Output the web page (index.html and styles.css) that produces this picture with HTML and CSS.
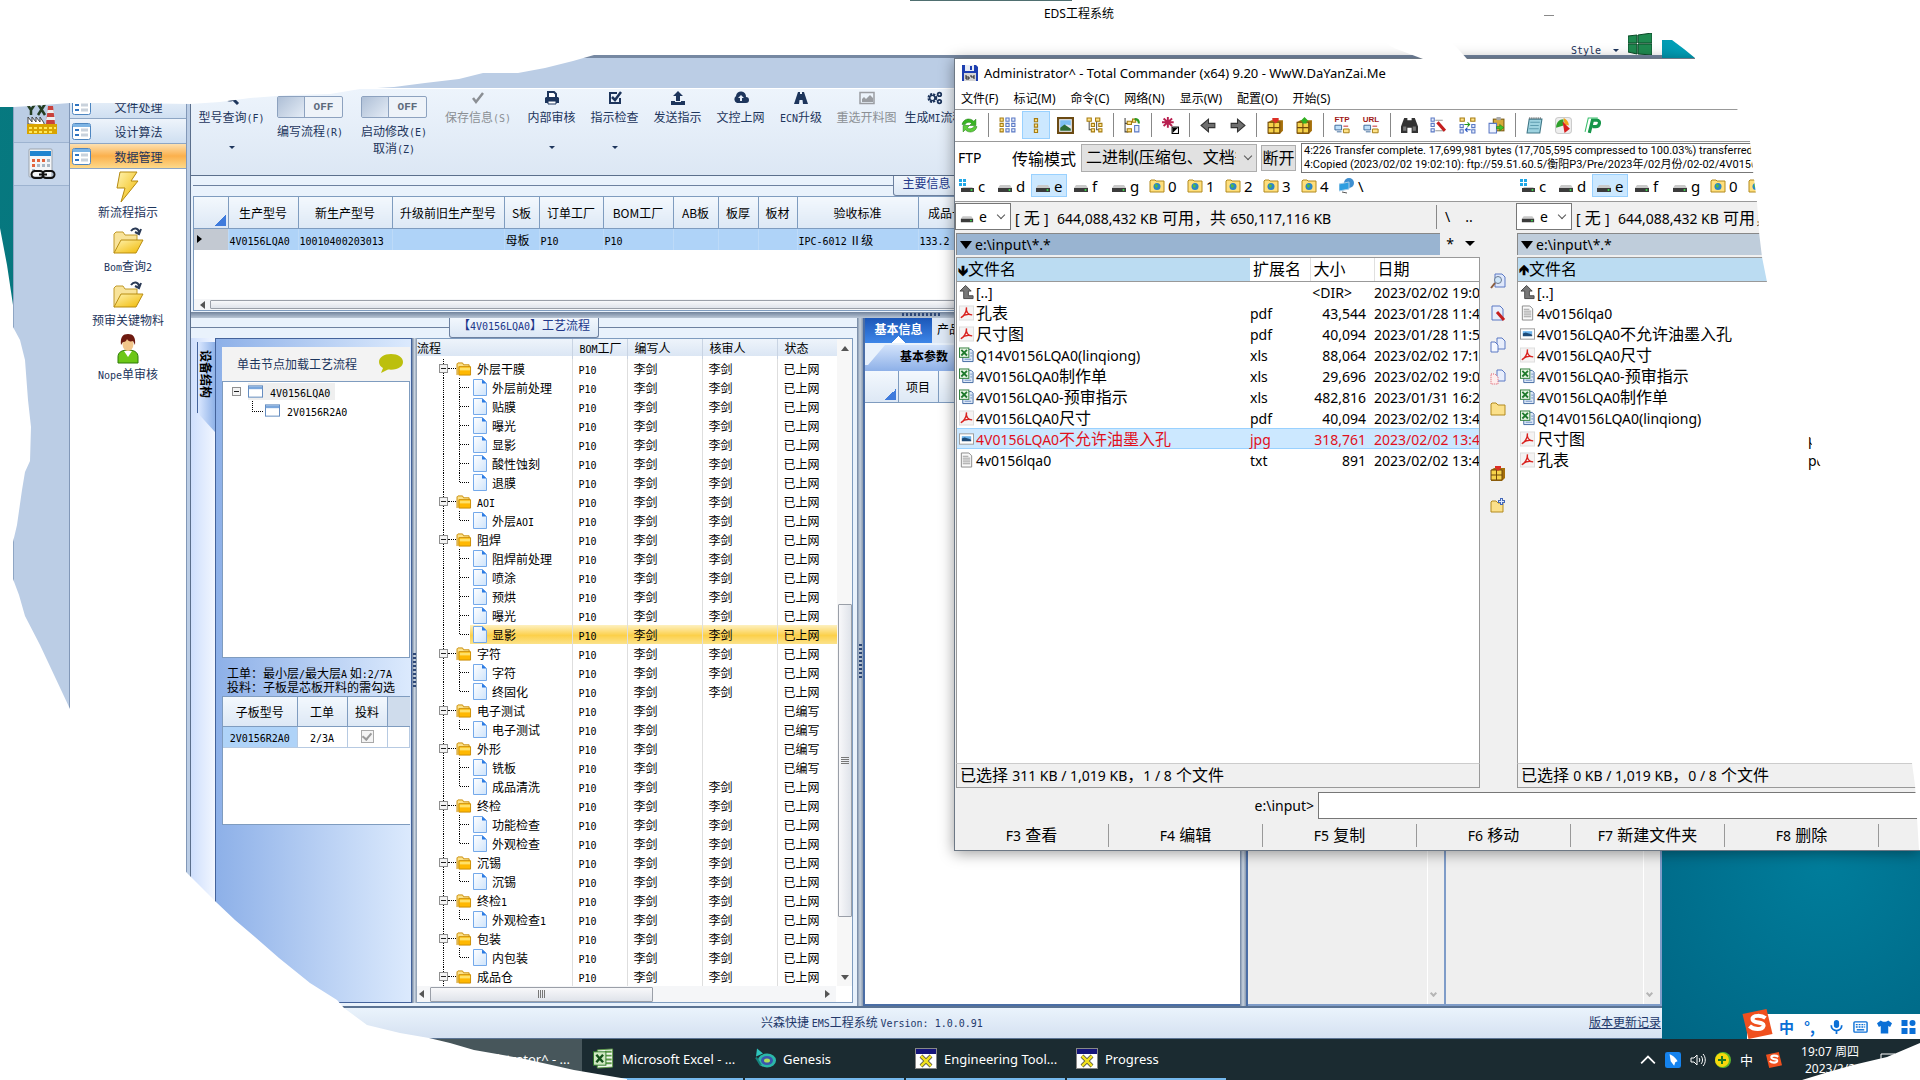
FILE: index.html
```html
<!DOCTYPE html>
<html lang="zh-CN">

<head>
    <meta charset="UTF-8" />
    <meta name="viewport" content="width=device-width, initial-scale=1.0" />
    <title>EDS工程系统</title>
    <link rel="stylesheet" href="styles.css">
</head>

<body>
    <!-- Icon sprite -->
    <svg class="sprite" aria-hidden="true">
        <linearGradient id="gFolder" x1="0" y1="0" x2="1" y2="1"><stop offset="0" stop-color="#fff3b0" /><stop offset="1" stop-color="#f0b800" /></linearGradient>
        <linearGradient id="gPage" x1="0" y1="0" x2="1" y2="1"><stop offset="0" stop-color="#ffffff" /><stop offset="1" stop-color="#cfe4fb" /></linearGradient>
        <symbol id="form" viewBox="0 0 19 17"><rect x=".5" y=".5" width="18" height="16" rx="2" fill="#fff" stroke="#4e86c0" /><rect x="1" y="1" width="17" height="3" fill="#7db4e4" /><path d="M3 7h4M3 12h4" stroke="#2f74c0" stroke-width="2" /><path d="M9 7h7M9 12h7" stroke="#c9d2dc" stroke-width="3" /></symbol>
        <symbol id="factory" viewBox="0 0 32 32"><path d="M1 1l4 6v5M9 1L5 7M12 1l7 11M19 1l-7 11" stroke="#243d22" stroke-width="2.5" fill="none" /><path d="M22 3h5l2 18h-9z" fill="#c9413c" /><path d="M21.5 7h6l.5 3h-7zM21 14h8v3h-9z" fill="#eee" /><path d="M2 21v-7l4 5v-5l4 5v-5l4 5v-5l4 6v2z" fill="#fff" stroke="#444" /><rect x="1" y="21" width="30" height="10" fill="#d9a400" /><path d="M3 24h3v2H3zM8 24h3v2H8zM13 24h3v2h-3zM18 24h3v2h-3zM23 24h3v2h-3zM28 24h2v2h-2zM3 28h3v2H3zM8 28h3v2H8zM13 28h3v2h-3zM18 28h3v2h-3zM23 28h3v2h-3z" fill="#ffe95a" /></symbol>
        <symbol id="calc" viewBox="0 0 32 32"><rect x="3" y="1" width="23" height="28" rx="1" fill="#f4f6f8" stroke="#9aa3ad" /><rect x="4" y="3" width="21" height="5" fill="#1f84cf" /><path d="M6 11h3v3H6zM11 11h3v3h-3zM16 11h3v3h-3zM6 16h3v3H6z" fill="#e2643c" /><path d="M21 11h3v3h-3zM11 16h3v3h-3zM16 16h3v3h-3zM21 16h3v3h-3zM6 21h3v3H6z" fill="#a9b8c4" /><path d="M8 23h6a3.500 3.500 0 0 1 0 7H9a3.500 3.500 0 0 1 0-7zM21 23h4a3.500 3.500 0 0 1 0 7h-5a3.500 3.500 0 0 1 0-7zM13 26.500h8" stroke="#111" stroke-width="2" fill="none" /></symbol>
        <symbol id="bolt" viewBox="0 0 32 32"><path d="M8 1h17l-6 9h7L9 31l4-14H5z" fill="url(#gFolder)" stroke="#b58a10" /></symbol>
        <symbol id="folderopen" viewBox="0 0 32 32"><path d="M2 28V9l2-2h7l2 3h12v5z" fill="#f8e39a" stroke="#c09a2a" /><path d="M2 28l7-13h22l-7 13z" fill="url(#gFolder)" stroke="#b98d12" /><path d="M19 6c3-4 7-3 8 1M29 4l-2 5-4-2" fill="none" stroke="#2a3a55" stroke-width="2" /></symbol>
        <symbol id="user" viewBox="0 0 32 32"><path d="M6 30v-6c0-5 4-7 10-7s10 2 10 7v6z" fill="#6cc717" stroke="#2d7a07" /><path d="M12 18l4 6 4-6z" fill="#fff" /><ellipse cx="16" cy="11" rx="5.500" ry="7" fill="#f2c58a" /><path d="M9 12C8 4 11 1 16 1s8 3 7 11l-2-4c-3 1-5 0-6-2-1 3-3 3-4 3z" fill="#6e1a10" /></symbol>
        <symbol id="chat" viewBox="0 0 24 20"><path d="M12 1C5 1 0 4.500 0 9c0 3 2 5 4 6l-2 5 7-3.500c10 1 15-3 15-7.500S19 1 12 1z" fill="#bcbf0d" /></symbol>
        <symbol id="windowi" viewBox="0 0 16 13"><rect x=".5" y=".5" width="15" height="12" fill="#fff" stroke="#5c86bd" /><rect x="1" y="1" width="14" height="3" fill="#7ba7dc" /></symbol>
        <symbol id="minus" viewBox="0 0 9 9"><rect x=".5" y=".5" width="8" height="8" fill="#f4f4f4" stroke="#8f8f8f" /><path d="M2 4.500h5" stroke="#222" /></symbol>
        <symbol id="folder" viewBox="0 0 17 15"><path d="M1 14V2l1-1h5l1 2h6v3" fill="#fce28a" stroke="#c98a00" /><path d="M3 14V5h12.500v9z" fill="#ffb802" stroke="#c98a00" /><path d="M4 6h11v3H4z" fill="#ffe169" /></symbol>
        <symbol id="page" viewBox="0 0 14 17"><path d="M.5.500h9l4 4v12H.500z" fill="url(#gPage)" stroke="#74a9ea" /><path d="M9 .500v4h4.500z" fill="#2b7be4" /></symbol>
        <symbol id="check" viewBox="0 0 16 16"><path d="M3 8l3 4 7-9" fill="none" stroke="#8b8f94" stroke-width="2.500" /></symbol>
        <symbol id="search" viewBox="0 0 16 16"><circle cx="6" cy="6" r="4.500" fill="none" stroke="#1d355c" stroke-width="2" /><path d="M9 9l5 5" stroke="#1d355c" stroke-width="3" /></symbol>
        <symbol id="print" viewBox="0 0 16 16"><path d="M4 8V2h6l2 2v4" fill="#fff" stroke="#1d355c" stroke-width="2" /><path d="M1 8l1-1h12l1 1v5H1z" fill="#1d355c" /><path d="M4 11h8v3H4z" fill="#fff" stroke="#1d355c" /></symbol>
        <symbol id="tick" viewBox="0 0 16 16"><path d="M13 8v5H3V3h7" fill="none" stroke="#1d355c" stroke-width="2" /><path d="M5 7l3 3 6-8" fill="none" stroke="#1d355c" stroke-width="2.500" /></symbol>
        <symbol id="upload" viewBox="0 0 16 16"><path d="M8 1l5 5h-3v5H6V6H3zM1 11h4v1h6v-1h4v4H1z" fill="#1d355c" /></symbol>
        <symbol id="cloud" viewBox="0 0 16 16"><path d="M4 13a4 4 0 0 1-1-7 5 5 0 0 1 10 1 3 3 0 0 1 0 6z" fill="#1d355c" /><path d="M8 5l3 3H9v3H7V8H5z" fill="#e6eef8" /></symbol>
        <symbol id="road" viewBox="0 0 16 16"><path d="M5 2h2v2h2V2h2l4 12h-5l-.5-4h-3L6 14H1z" fill="#1d355c" /></symbol>
        <symbol id="photo" viewBox="0 0 16 16"><rect x="1" y="2.500" width="14" height="11" fill="none" stroke="#9a9da2" stroke-width="1.500" /><path d="M3 12V9l2-2 2 2 4-4 3 3v4z" fill="#9a9da2" /></symbol>
        <symbol id="gears" viewBox="0 0 18 16"><circle cx="6" cy="8" r="4" fill="none" stroke="#1d355c" stroke-width="3" stroke-dasharray="2.200 1" /><circle cx="6" cy="8" r="3" fill="none" stroke="#1d355c" stroke-width="1.500" /><circle cx="14" cy="4" r="2" fill="none" stroke="#1d355c" stroke-width="2" /><circle cx="14" cy="12" r="2" fill="none" stroke="#1d355c" stroke-width="2" /></symbol>

        <symbol id="disk" viewBox="0 0 16 16"><path d="M0 0h14l2 2v14H0z" fill="#1d3fb0" /><path d="M3 0h9v6H3z" fill="#e8ecf4" /><path d="M8 1h2v4H8z" fill="#1d3fb0" /><rect x="2" y="8" width="12" height="8" fill="#d5d5d5" /><path d="M4 10v4h3v-2H4M9 10v2h3M12 10v4" stroke="#222" fill="none" /></symbol>
        <symbol id="refresh" viewBox="0 0 16 16"><path d="M1 7c1-5 7-7 11-3l2-2v6H8l2-2C8 4 5 5 4 7z" fill="#38b523" stroke="#1c7d10" stroke-width=".5" /><path d="M15 9c-1 5-7 7-11 3l-2 2V8h6l-2 2c2 2 5 1 6-1z" fill="#5ccd3b" stroke="#1c7d10" stroke-width=".5" /></symbol>
        <symbol id="grid" viewBox="0 0 16 16"><path d="M1 1h3v3H1zM1 6h3v3H1zM1 11h3v3H1z" fill="#ffe38a" stroke="#a57b10" /><path d="M6.500 1h3v3h-3zM12 1h3v3h-3zM6.500 6h3v3h-3zM12 6h3v3h-3zM6.500 11h3v3h-3zM12 11h3v3h-3z" fill="#e8eefc" stroke="#5a78c4" /></symbol>
        <symbol id="list" viewBox="0 0 16 16"><path d="M6 1.500h3v3H6zM6 6.500h3v3H6zM6 11.500h3v3H6z" fill="#ffe38a" stroke="#a57b10" /></symbol>
        <symbol id="frame" viewBox="0 0 16 16"><rect x="1" y="1" width="14" height="14" fill="#e3e9ef" stroke="#6b4a12" stroke-width="2" /><path d="M3 3h10v5l-4-1-6 3z" fill="#7fc0f2" /><path d="M3 10l4-3 6 4v2H3z" fill="#2e6b35" /></symbol>
        <symbol id="tree" viewBox="0 0 16 16"><path d="M3 3v9h4M10 3v9h3" stroke="#555" fill="none" /><path d="M1 1h4v3H1zM9 1h4v3H9zM5 6h3v3H5zM5 11h3v3H5zM12 11h3v3h-3zM12 6h3v3h-3z" fill="#ffe38a" stroke="#a57b10" /></symbol>
        <symbol id="branch" viewBox="0 0 16 16"><path d="M1 1v13h3M1 6h3" stroke="#444" fill="none" /><path d="M3 4h4v3H3zM3 11h4v3H3zM8 2h3v3H8z" fill="#ffe38a" stroke="#a57b10" /><path d="M10 2c3 0 4 2 4 4" stroke="#2b9a22" stroke-width="2" fill="none" /><path d="M10 8h4v6h-4z" fill="#e8eefc" stroke="#5a78c4" /></symbol>
        <symbol id="star" viewBox="0 0 16 16"><path d="M5.500 0v10M1.500 1.500l8 7M9.500 1.500l-8 7M0 5h11" stroke="#b82050" stroke-width="1.800" /><rect x="9.500" y="9.500" width="6" height="6" fill="#fff" stroke="#000" /><path d="M10 10h5l-5 5z" /></symbol>
        <symbol id="left" viewBox="0 0 16 16"><path d="M1 8l7-6v4h6v4H8v4z" fill="#6f6f6f" stroke="#333" /></symbol>
        <symbol id="right" viewBox="0 0 16 16"><path d="M15 8L8 2v4H2v4h6v4z" fill="#6f6f6f" stroke="#333" /></symbol>
        <symbol id="pack" viewBox="0 0 16 16"><path d="M1 5l3-2h11v10l-3 3H1z" fill="#a56f0a" /><path d="M1 5h11v10H1z" fill="#f6d24a" stroke="#70480a" /><path d="M6.500 5v10M1 10h11" stroke="#70480a" /><path d="M5 1h6v2l-3 3-3-3z" fill="#dc2f26" /></symbol>
        <symbol id="unpack" viewBox="0 0 16 16"><path d="M1 5l3-2h11v10l-3 3H1z" fill="#a56f0a" /><path d="M1 5h11v10H1z" fill="#f6d24a" stroke="#70480a" /><path d="M6.500 5v10M1 10h11" stroke="#70480a" /><path d="M8 0l4 4h-2v2H6V4H4z" fill="#30b022" /></symbol>
        <symbol id="net" viewBox="0 0 18 10"><path d="M1 1h7v5H1zM3 8h5" fill="#bfe0fa" stroke="#3c6798" /><path d="M10 5h6v4h-6z" fill="#ffe38a" stroke="#a57b10" /><path d="M10 2h5" stroke="#c02020" /></symbol>
        <symbol id="binoc" viewBox="0 0 16 16"><path d="M3 1h3v2h4V1h3l3 8v6h-6v-5H6v5H0V9z" fill="#333" /><path d="M2 9h3v4H2zM11 9h3v4h-3z" fill="#777" /></symbol>
        <symbol id="rename" viewBox="0 0 16 16"><path d="M1 1h3v3H1zM1 6h3v3H1zM1 11h3v3H1z" fill="#e8eefc" stroke="#5a78c4" /><path d="M5 3h7M5 13h9" stroke="#999" /><path d="M7 5l7 8" stroke="#c41e1e" stroke-width="3" /></symbol>
        <symbol id="sync" viewBox="0 0 16 16"><path d="M1 1h4v3H1zM11 1h4v3h-4z" fill="#ffe38a" stroke="#a57b10" /><path d="M1 7h3v3H1zM12 7h3v3h-3zM1 12h3v3H1zM12 12h3v3h-3z" fill="#e8eefc" stroke="#5a78c4" /><path d="M5 7h5M8 5l2 2-2 2" stroke="#239a1c" fill="none" /><path d="M11 12H6M8 10l-2 2 2 2" stroke="#2554c0" fill="none" /></symbol>
        <symbol id="paste" viewBox="0 0 16 16"><rect x="5" y="2" width="10" height="11" fill="#d8a93a" stroke="#7a5b12" /><rect x="8" y="0" width="4" height="3" fill="#aaa" /><path d="M1 6h7v9H1z" fill="#eef3ff" stroke="#5a78c4" /><path d="M8 9h3V7l4 3-4 3v-2H8z" fill="#43c32a" stroke="#1c7d10" stroke-width=".5" /></symbol>
        <symbol id="note" viewBox="0 0 16 16"><path d="M3 2h12l-2 13H1z" fill="#9ed3e0" stroke="#3f7686" /><path d="M4 5h9M4 8h8M3 11h9" stroke="#5f9db0" /><path d="M3 1h12" stroke="#333" stroke-dasharray="1 1" /></symbol>
        <symbol id="pie" viewBox="0 0 16 16"><rect x=".5" y=".5" width="15" height="15" rx="3" fill="#eee" stroke="#ccc" /><path d="M8 2v6l-7 2C1 5 4 2 8 2z" fill="#2ea02b" /><path d="M8 1c3 1 5 4 5 7l-4-1z" fill="#f2a21b" /><path d="M7 4l7 7-5 4z" fill="#d61f1f" /></symbol>
        <symbol id="pp" viewBox="0 0 16 16"><path d="M5 15L8 3h4c4 0 3 6-1 6H8" fill="none" stroke="#16964a" stroke-width="3" /><path d="M1 14L4 1h9" fill="none" stroke="#3abf6c" /></symbol>
        <symbol id="drive" viewBox="0 0 16 16"><path d="M3 7h10l2 3H1z" fill="#c9c9c9" /><rect x="1" y="10" width="14" height="4" fill="#3b3b3b" /><circle cx="12.500" cy="12" r="1" fill="#3be24a" /></symbol>
        <symbol id="windrive" viewBox="0 0 16 16"><path d="M0 1h3v3H0zM4 1h3v3H4zM0 5h3v3H0zM4 5h3v3H4z" fill="#20a8e8" /><path d="M4 9h9l2 2H2z" fill="#c9c9c9" /><rect x="2" y="10" width="13" height="4" fill="#3b3b3b" /><circle cx="12.500" cy="12" r="1" fill="#3be24a" /></symbol>
        <symbol id="netfolder" viewBox="0 0 16 16"><path d="M1 14V3l1-1h4l1 1h8v11z" fill="#ffdf7c" stroke="#b28a1e" /><circle cx="8" cy="8.500" r="3.500" fill="#2a86c8" /><path d="M6 6l3 1-1 3-2-1z" fill="#55bb3c" /></symbol>
        <symbol id="network" viewBox="0 0 16 16"><circle cx="10" cy="5" r="5" fill="#3f8fd0" /><path d="M0 6l10-2v7L0 13z" fill="#2f9ee0" stroke="#a8cde8" /><path d="M3 14l5 1" stroke="#555" /></symbol>
        <symbol id="up" viewBox="0 0 16 16"><path d="M7 1l6 6h-3v5h5v3H5V7H1z" fill="#777" stroke="#444" /></symbol>
        <symbol id="pdf" viewBox="0 0 16 16"><rect x=".5" y=".5" width="15" height="15" fill="#f5f3f3" stroke="#ddd" /><path d="M2 13c3-1 6-6 6-11-1 5 2 8 6 8-4-1-9 0-12 3z" fill="none" stroke="#d9211e" stroke-width="1.500" /></symbol>
        <symbol id="xls" viewBox="0 0 16 16"><path d="M6 2h7l2 2v11H4V8z" fill="#dfe9f7" stroke="#3f66a0" /><rect x=".5" y=".5" width="10" height="10" fill="#e9f5e6" stroke="#2c7c37" /><path d="M2.500 2.500l6 6M8.500 2.500l-6 6" stroke="#1f7a2d" stroke-width="2" /><path d="M6 12.500h7M12 6h2M12 9h2" stroke="#6c8fc4" /></symbol>
        <symbol id="jpg" viewBox="0 0 16 16"><rect x=".5" y="2.500" width="15" height="11" fill="#fff" stroke="#999" /><path d="M3 5h10v3H3z" fill="#6db4ec" /><path d="M3 7.500l3-1 7 2v2H3z" fill="#1e4b78" /></symbol>
        <symbol id="txt" viewBox="0 0 16 16"><path d="M2.500.500h8l3 3v12h-11z" fill="#fafafa" stroke="#888" /><path d="M4 4h6M4 6h8M4 8h8M4 10h8M4 12h8" stroke="#999" /></symbol>
        <symbol id="view" viewBox="0 0 16 16"><path d="M5 1h7l3 3v10H5z" fill="#dfe8fb" stroke="#5a78c4" /><circle cx="8" cy="7" r="3.500" fill="#cfe6fa" stroke="#6a7a90" /><path d="M5 10l-4 5" stroke="#8a5a3a" stroke-width="2" /></symbol>
        <symbol id="edit" viewBox="0 0 16 16"><path d="M2 1h8l3 3v11H2z" fill="#e8eefc" stroke="#5a78c4" /><path d="M7 7l7 8" stroke="#c41e1e" stroke-width="3" /></symbol>
        <symbol id="copy" viewBox="0 0 16 16"><path d="M7 1h5l3 3v8H7z" fill="#e8eefc" stroke="#5a78c4" /><path d="M1 5h4l3 3v7H1z" fill="#f4f7ff" stroke="#5a78c4" /></symbol>
        <symbol id="move" viewBox="0 0 16 16"><path d="M7 1h5l3 3v8H7z" fill="#e8eefc" stroke="#5a78c4" /><path d="M1 5h4l3 3v7H1z" fill="#fdeeee" stroke="#e05a6a" stroke-dasharray="1 1" /></symbol>
        <symbol id="dir" viewBox="0 0 16 16"><path d="M1 14V3l1-1h4l2 2h7v10z" fill="#fbe08a" stroke="#b28a1e" /></symbol>
        <symbol id="newdir" viewBox="0 0 16 16"><path d="M1 15V5l1-1h4l2 2h5v9z" fill="#fbe08a" stroke="#b28a1e" /><path d="M11.500 1v7M8 4.500h7" stroke="#4468b8" stroke-width="3" /><path d="M11.500 2v5M9 4.500h5" stroke="#dce8ff" /></symbol>

        <symbol id="excel" viewBox="0 0 22 22"><path d="M4 2l16-1v19l-16 1z" fill="#f1f7ec" stroke="#5e9b4a" /><path d="M12 4h7M12 8h7M12 12h7M12 16h7" stroke="#5e9b4a" stroke-width="2" /><rect y="4" width="13" height="14" fill="#cfe8c0" stroke="#2e7a2a" /><path d="M3 7l7 8M10 7l-7 8" stroke="#14521a" stroke-width="2.500" /></symbol>
        <symbol id="eye" viewBox="0 0 22 20"><path d="M3 0l6 5-7 3z" fill="#2fc6bd" /><ellipse cx="13" cy="12" rx="9" ry="7" fill="#2bb7a9" /><ellipse cx="13" cy="12" rx="6" ry="4.500" fill="#3b55ae" /><ellipse cx="13" cy="12" rx="3" ry="2" fill="#a9e05a" /><path d="M2 9l5 8" stroke="#15837c" stroke-width="2" /></symbol>
        <symbol id="xwin" viewBox="0 0 22 21"><rect x=".5" y=".5" width="21" height="20" fill="#fff" stroke="#888" /><rect x="1" y="1" width="20" height="5" fill="#14147a" /><path d="M6 8l10 10M16 8L6 18" stroke="#444" stroke-width="4" /><path d="M6 8l10 10M16 8L6 18" stroke="#f0e020" stroke-width="2.500" /></symbol>
        <symbol id="sogou" viewBox="0 0 30 30"><path d="M0 5L24 0l6 25-24 5z" fill="#f0501e" /><path d="M23 9c-4-3-13-3-13 1 0 5 12 2 11 7-1 4-10 4-14 0" fill="none" stroke="#fff" stroke-width="4" /></symbol>
        <symbol id="volume" viewBox="0 0 16 14"><path d="M1 5h3l3-3v10L4 9H1zM9 5c1 1 1 3 0 4M11 3c2 2 2 6 0 8M13 1c3 3 3 9 0 12" fill="none" stroke="#fff" /></symbol>
        <symbol id="mic" viewBox="0 0 14 16"><rect x="4" width="6" height="9" rx="3" fill="#0a6fd6" /><path d="M1 6c0 8 12 8 12 0M7 12v4" fill="none" stroke="#0a6fd6" stroke-width="2" /></symbol>
        <symbol id="kbd" viewBox="0 0 16 14"><rect x="1" y="1.500" width="14" height="11" rx="1" fill="none" stroke="#0a6fd6" stroke-width="1.500" /><path d="M3 4.500h10M3 7h10" stroke="#0a6fd6" stroke-width="1.500" stroke-dasharray="2 1" /><path d="M4 10h8" stroke="#0a6fd6" stroke-width="1.500" /></symbol>
        <symbol id="shirt" viewBox="0 0 16 14"><path d="M4 0c2 2 6 2 8 0l4 3-2 4-2-1v8H4V6L2 7 0 3z" fill="#0a6fd6" /></symbol>
        <symbol id="apps" viewBox="0 0 14 14"><path d="M0 0h6v6H0zM0 8h6v6H0zM8 8h6v6H8z" fill="#0a6fd6" /><circle cx="11" cy="3" r="3" fill="#0a6fd6" /></symbol>
    </svg>

    <div class="desktop">
        <!-- EDS window -->
        <div class="eds">
            <header class="eds-title">
                <h1 class="mix">EDS工程系统</h1>
                <span class="minimise"></span>
                <button class="style-btn">Style <i class="caret"></i></button>
                <svg class="winlogo" viewBox="0 0 24 22"><path d="M0 3l9-1v8H0zM10 2l14-2v10H10zM0 11h9v10l-9-2zM10 11h14v11l-14-1z" fill="#1f8a50" stroke="#0c4a28" /></svg>
            </header>
            <div class="eds-band"></div>
            <div class="eds-body">
                <nav class="rail">
                    <button class="rail-item on" aria-label="工厂"><svg><use href="#factory" /></svg></button>
                    <button class="rail-item" aria-label="计算"><svg><use href="#calc" /></svg></button>
                </nav>
                <aside class="side">
                    <button class="side-item"><svg><use href="#form" /></svg><span>文件处理</span></button>
                    <button class="side-item"><svg><use href="#form" /></svg><span>设计算法</span></button>
                    <button class="side-item active"><svg><use href="#form" /></svg><span>数据管理</span></button>
                    <a class="shortcut" href="#"><svg><use href="#bolt" /></svg><span>新流程指示</span></a>
                    <a class="shortcut" href="#"><svg><use href="#folderopen" /></svg><span class="mix">Bom查询2</span></a>
                    <a class="shortcut" href="#"><svg><use href="#folderopen" /></svg><span>预审关键物料</span></a>
                    <a class="shortcut" href="#"><svg><use href="#user" /></svg><span class="mix">Nope单审核</span></a>
                </aside>
                <main class="main">
                    <div class="ribbon">
                        <button class="tool w-m"><svg><use href="#search" /></svg><span class="mix">型号查询(F)</span><i class="caret"></i></button>
                        <button class="tool switch w-l"><span class="toggle"><b></b><em>OFF</em></span><span class="mix">编写流程(R)</span></button>
                        <button class="tool switch w-l"><span class="toggle"><b></b><em>OFF</em></span><span class="mix">启动修改(E)</span><span class="mix">取消(Z)</span></button>
                        <button class="tool w-l" disabled><svg><use href="#check" /></svg><span class="mix">保存信息(S)</span></button>
                        <button class="tool"><svg><use href="#print" /></svg><span>内部审核</span><i class="caret"></i></button>
                        <button class="tool"><svg><use href="#tick" /></svg><span>指示检查</span><i class="caret"></i></button>
                        <button class="tool"><svg><use href="#upload" /></svg><span>发送指示</span></button>
                        <button class="tool"><svg><use href="#cloud" /></svg><span>文控上网</span></button>
                        <button class="tool w-s"><svg><use href="#road" /></svg><span class="mix">ECN升级</span></button>
                        <button class="tool w-m" disabled><svg><use href="#photo" /></svg><span>重选开料图</span></button>
                        <button class="tool"><svg><use href="#gears" /></svg><span class="mix">生成MI流程</span></button>
                    </div>

                    <section class="group info">
                        <div class="group-head"><span class="legend">主要信息</span></div>
                        <div class="info-box">
                            <table class="info-table">
                                <thead>
                                    <tr>
                                        <th class="corner"></th>
                                        <th>生产型号</th>
                                        <th>新生产型号</th>
                                        <th>升级前旧生产型号</th>
                                        <th>S板</th>
                                        <th>订单工厂</th>
                                        <th>BOM工厂</th>
                                        <th>AB板</th>
                                        <th>板厚</th>
                                        <th>板材</th>
                                        <th>验收标准</th>
                                        <th>成品长</th>
                                        <th></th>
                                    </tr>
                                </thead>
                                <tbody>
                                    <tr>
                                        <td class="rowmark"><i class="arr-r"></i></td>
                                        <td class="mix">4V0156LQA0</td>
                                        <td class="mix">10010400203013</td>
                                        <td></td>
                                        <td>母板</td>
                                        <td class="mix">P10</td>
                                        <td class="mix">P10</td>
                                        <td></td>
                                        <td></td>
                                        <td></td>
                                        <td class="mix">IPC-6012 Ⅱ级</td>
                                        <td class="mix">133.2</td>
                                        <td></td>
                                    </tr>
                                </tbody>
                            </table>
                            <div class="hbar"><i class="arr-l"></i><span class="thumb"></span></div>
                        </div>
                    </section>
                    <div class="split-h"><span></span></div>

                    <div class="lower">
                        <section class="group flow">
                            <div class="group-head"><span class="legend mix">【4V0156LQA0】工艺流程</span></div>
                            <div class="flow-body">
                                <div class="vtabs"><button class="vtab">设备结构</button></div>
                                <div class="device">
                                    <div class="device-head"><span>单击节点加载工艺流程</span><svg><use href="#chat" /></svg></div>
                                    <ul class="device-tree">
                                        <li><svg class="exp"><use href="#minus" /></svg><span class="node sel"><svg><use href="#windowi" /></svg><span class="mix">4V0156LQA0</span></span></li>
                                        <li class="child"><span class="node"><svg><use href="#windowi" /></svg><span class="mix">2V0156R2A0</span></span></li>
                                    </ul>
                                    <p class="hint"><span class="mix">工单：最小层/最大层A 如:2/7A</span><br><span class="mix">投料：子板是芯板开料的需勾选</span></p>
                                    <div class="sub-box">
                                        <table class="sub-table">
                                            <thead>
                                                <tr><th>子板型号</th><th>工单</th><th>投料</th><th></th></tr>
                                            </thead>
                                            <tbody>
                                                <tr><td class="mix hit">2V0156R2A0</td><td class="mix">2/3A</td><td><input type="checkbox" checked disabled aria-label="投料"></td><td></td></tr>
                                            </tbody>
                                        </table>
                                    </div>
                                </div>
                                <div class="split-v"><span></span></div>
                                <div class="process">
                                    <div class="process-view">
                                        <table class="process-table">
                                            <thead>
                                                <tr><th>流程</th><th class="mix">BOM工厂</th><th>编写人</th><th>核审人</th><th>状态</th></tr>
                                            </thead>
                                            <tbody id="processBody"></tbody>
                                        </table>
                                        <div class="vbar"><i class="arr-u"></i><span class="thumb"></span><i class="arr-d"></i></div>
                                    </div>
                                    <div class="hbar wide"><i class="arr-l"></i><span class="thumb"></span><i class="arr-r"></i></div>
                                </div>
                            </div>
                        </section>
                        <div class="split-v wide"><span></span></div>
                        <section class="detail">
                            <div class="tabs"><button class="tab on">基本信息</button><button class="tab">产品信息</button></div>
                            <div class="subtabs"><button class="subtab">基本参数</button></div>
                            <table class="detail-table">
                                <thead><tr><th class="corner"></th><th>项目</th><th></th></tr></thead>
                            </table>
                        </section>
                        <div class="split-v wide"></div>
                        <div class="grey"><i class="chev"></i></div>
                        <div class="grey"><i class="chev"></i></div>
                    </div>
                </main>
            </div>
            <footer class="eds-status"><span class="mix">兴森快捷 EMS工程系统 Version: 1.0.0.91</span><a href="#">版本更新记录</a></footer>
        </div>

        <!-- Total Commander window -->
        <div class="tc">
            <header class="tc-title"><svg><use href="#disk" /></svg>Administrator^ - Total Commander (x64) 9.20 - WwW.DaYanZai.Me</header>
            <nav class="tc-menu">
                <button>文件(F)</button><button>标记(M)</button><button>命令(C)</button><button>网络(N)</button><button>显示(W)</button><button>配置(O)</button><button>开始(S)</button>
            </nav>
            <div class="tc-tools" id="tcTools"></div>
            <div class="tc-ftp">
                <span class="proto">FTP</span>
                <label for="mode">传输模式</label>
                <span class="mode"><select id="mode"><option>二进制(压缩包、文档等)</option></select></span>
                <button>断开</button>
                <div class="log"><div>4:226 Transfer complete. 17,699,981 bytes (17,705,595 compressed to 100.03%) transferred. 5</div><div>4:Copied (2023/02/02 19:02:10): ftp://59.51.60.5/衡阳P3/Pre/2023年/02月份/02-02/4V0156</div></div>
            </div>
            <div class="tc-grid drives-row">
                <div class="drives"></div>
                <div></div>
                <div class="drives"></div>
            </div>
            <div class="tc-grid panes">
                <section class="pane">
                    <div class="volume">
                        <span class="combo"><svg><use href="#drive" /></svg><select aria-label="驱动器"><option>e</option></select></span>
                        <span class="mix free">[ 无 ]&nbsp; 644,088,432 KB 可用，共 650,117,116 KB</span>
                        <button class="root">\</button><button>..</button>
                    </div>
                    <div class="path"><span><i class="tri"></i>e:\input\*.*</span><button>*</button><button aria-label="历史"><i class="tri small"></i></button></div>
                    <div class="files">
                        <table>
                            <thead><tr><th class="name"><b>&#129147;</b>文件名</th><th>扩展名</th><th>大小</th><th>日期</th></tr></thead>
                            <tbody id="leftFiles"></tbody>
                        </table>
                    </div>
                    <div class="summary mix">已选择 311 KB / 1,019 KB，1 / 8 个文件</div>
                </section>
                <div class="midbar" id="midBar"></div>
                <section class="pane other">
                    <div class="volume">
                        <span class="combo"><svg><use href="#drive" /></svg><select aria-label="驱动器"><option>e</option></select></span>
                        <span class="mix free">[ 无 ]&nbsp; 644,088,432 KB 可用，</span>
                    </div>
                    <div class="path"><span><i class="tri"></i>e:\input\*.*</span></div>
                    <div class="files">
                        <table>
                            <thead><tr><th class="name"><b>&#129145;</b>文件名</th><th></th><th></th><th></th></tr></thead>
                            <tbody id="rightFiles"></tbody>
                        </table>
                    </div>
                    <div class="summary mix">已选择 0 KB / 1,019 KB，0 / 8 个文件</div>
                </section>
            </div>
            <div class="tc-cmd"><label for="cmd">e:\input&gt;</label><input id="cmd" type="text"></div>
            <div class="tc-keys">
                <button class="mix">F3 查看</button><button class="mix">F4 编辑</button><button class="mix">F5 复制</button><button class="mix">F6 移动</button><button class="mix">F7 新建文件夹</button><button class="mix">F8 删除</button>
            </div>
        </div>

        <!-- Input method bar -->
        <div class="ime">
            <svg class="ime-logo"><use href="#sogou" /></svg>
            <span>中</span><span>°,</span>
            <svg><use href="#mic" /></svg><svg><use href="#kbd" /></svg><svg><use href="#shirt" /></svg><svg><use href="#apps" /></svg>
        </div>

        <!-- Taskbar -->
        <div class="taskbar">
            <button class="task active">Administrator^ - ...</button>
            <button class="task"><svg><use href="#excel" /></svg>Microsoft Excel - ...</button>
            <button class="task"><svg><use href="#eye" /></svg>Genesis</button>
            <button class="task"><svg><use href="#xwin" /></svg>Engineering Tool...</button>
            <button class="task"><svg><use href="#xwin" /></svg>Progress</button>
            <div class="tray">
                <svg viewBox="0 0 14 14"><path d="M1 10l6-6 6 6" fill="none" stroke="#fff" stroke-width="1.500" /></svg>
                <svg viewBox="0 0 14 14"><rect width="14" height="14" rx="2" fill="#1583ee" /><path d="M4 2c3 1 6 4 7 6l-2 1-1 3-3-4z" fill="#fff" /></svg>
                <svg viewBox="0 0 16 14"><use href="#volume" /></svg>
                <svg viewBox="0 0 16 16"><circle cx="8" cy="8" r="8" fill="#5cb82c" /><circle cx="7" cy="8" r="7" fill="#f7d90c" /><path d="M7 4v8M3 8h8" stroke="#1d7a24" stroke-width="2" /></svg>
                <span>中</span>
                <svg class="tray-s" viewBox="0 0 30 30"><use href="#sogou" /></svg>
                <div class="clock"><div>19:07 周四</div><div>2023/2/2</div></div>
                <svg class="note-ico" viewBox="0 0 16 14"><path d="M1 1h14v10H8l-3 3v-3H1z" fill="none" stroke="#fff" /></svg>
            </div>
        </div>

        <!-- Torn white edges -->
        <svg class="torn" viewBox="0 0 1920 1080" preserveAspectRatio="none">
            <path d="M0 0H594V55L573 61L545 68L518 73H483L459 79L425 83L394 87L360 89L330 94L290 95L250 98L220 102L190 104L130 103H70L30 106L14 107H0z" />
            <path d="M0 228L7 265L13 305V327L20 340L25 360L28 400L31 427L30 461L25 472L22 490L17 525L13 542V579L19 595L25 616L40 645L70 709L187 873L192 878L216 902L235 920L255 937L279 958L310 983L337 1000L344 1008L367 1025L400 1033L429 1038L450 1043L474 1050L525 1059L574 1070L627 1079V1080H0z" />
            <path d="M1380 40L1394 48L1423 59H1467L1453 43L1440 30z" />
            <path d="M1662 0V40H1672L1684 49L1695 58V60L1737 108L1742 125L1750 141L1753 171L1757 202L1759 232L1762 257L1767 282L1802 400L1807 425L1811 440L1813 450L1820 465L1860 580L1912 763L1915 785L1919 850H1920V0z" />
            <path d="M1920 1043L1887 1057L1853 1065L1825 1073L1802 1080H1920z" />
        </svg>
    </div>
    <script src="script.js"></script>
</body>

</html>
```

FILE: styles.css
```css
* {
    margin: 0;
    padding: 0;
    box-sizing: border-box;
}

body {
    background: #fff;
    color: #000;
    font-family: "Noto Sans CJK SC", sans-serif;
    font-size: 12px;
}

button,
input,
select {
    font: inherit;
    color: inherit;
    background: none;
    border: 0;
    border-radius: 0;
}

a {
    color: inherit;
    text-decoration: none;
}

ul {
    list-style: none;
}

svg {
    display: block;
    flex: none;
}

table {
    border-collapse: collapse;
    table-layout: fixed;
}

th {
    font-weight: normal;
}

.sprite {
    position: absolute;
    width: 0;
    height: 0;
}

.lat {
    font-family: "DejaVu Sans Mono", monospace;
    font-size: 10px;
    line-height: 1;
}

.caret {
    display: inline-block;
    border: 3px solid transparent;
    border-top-color: #1d355c;
    border-bottom: 0;
}


/* Desktop */

.desktop {
    position: relative;
    height: 100vh;
    overflow: hidden;
    background: radial-gradient(circle at 88% 4%, #00a5bd, transparent 8%), radial-gradient(circle at 95% 80%, #007d9b, #00617f 14%, #0a6576 60%, #067a80);
}

.torn {
    position: absolute;
    inset: 0;
    width: 100%;
    height: 100%;
    fill: #fff;
    pointer-events: none;
}


/* EDS window */

.eds {
    position: absolute;
    top: 0;
    left: 13px;
    right: 258px;
    bottom: 41px;
    display: flex;
    flex-direction: column;
    background: #bbcde5;
    border-left: 1px solid #8fa6c4;
    color: #1d355c;
}

.eds-title {
    display: flex;
    align-items: flex-end;
    height: 58px;
    background: linear-gradient(#4f6f70, #4f6f70) 896px 0 / 162px 1px no-repeat, #fff;
    border-bottom: 3px solid #7688a2;
}

.eds-title h1 {
    flex: 1;
    align-self: flex-start;
    padding: 4px 0 0 600px;
    font-size: 12px;
    font-weight: normal;
    color: #000;
    text-align: center;
}

.eds-title h1 .lat {
    font-family: "Noto Sans", sans-serif;
    font-size: 12px;
}

.minimise {
    align-self: flex-start;
    width: 10px;
    height: 1px;
    margin: 15px 17px 0 0;
    background: #8a8a8a;
}

.style-btn {
    height: 8px;
    margin-right: 9px;
    font-family: "DejaVu Sans Mono", monospace;
    font-size: 10px;
    line-height: 8px;
}

.style-btn .caret {
    margin: 0 0 2px 6px;
}

.winlogo {
    width: 24px;
    height: 22px;
    margin-right: 10px;
}

.eds-band {
    height: 30px;
}

.eds-body {
    flex: 1;
    display: flex;
    min-height: 0;
}

.rail {
    width: 55px;
}

.rail-item {
    display: flex;
    justify-content: center;
    align-items: center;
    width: 100%;
    height: 43px;
    border-bottom: 1px solid #9db3d0;
    background: #c5d5ea;
}

.rail-item.on {
    height: 55px;
    padding-top: 8px;
    background: #bbcde5;
}

.rail-item svg {
    width: 32px;
    height: 32px;
}

.side {
    width: 118px;
    padding-top: 6px;
    background: #fff;
    border-left: 1px solid #8298b8;
    border-right: 1px solid #8298b8;
}

.side-item {
    display: flex;
    align-items: center;
    width: 100%;
    height: 25px;
    padding-left: 2px;
    border-bottom: 1px solid #8ea6c4;
    background: linear-gradient(#eef4fb, #cfdff1);
}

.side-item svg {
    width: 19px;
    height: 17px;
}

.side-item span {
    flex: 1;
    text-align: center;
}

.side-item.active {
    background: linear-gradient(#fde0b0, #fbb04c 50%, #fdd98a);
}

.shortcut {
    display: flex;
    flex-direction: column;
    align-items: center;
    height: 54px;
    padding-top: 2px;
    line-height: 18px;
}

.shortcut svg {
    width: 32px;
    height: 32px;
}

.main {
    flex: 1;
    display: flex;
    flex-direction: column;
    min-width: 0;
    margin-left: 3px;
    border-left: 1px solid #5b6f8c;
    background: #e9f2fc;
    color: #000;
}

.ribbon {
    display: flex;
    height: 87px;
    padding: 1px 0 0 4px;
    overflow: hidden;
    border-top: 1px solid #fff;
    background: linear-gradient(#edf4fc, #dce7f4);
    color: #1d355c;
}

.tool {
    flex: none;
    display: flex;
    flex-direction: column;
    align-items: center;
    width: 63px;
    height: 84px;
    line-height: 18px;
    white-space: nowrap;
    color: #1d355c;
}

.tool.switch {
    line-height: 17px;
}

.tool svg {
    width: 16px;
    height: 16px;
    margin-bottom: 2px;
}

.tool .caret {
    margin-top: 20px;
}

.tool:disabled {
    color: #8b8f94;
}

.tool.w-s {
    width: 58px;
}

.tool.w-m {
    width: 73px;
}

.tool.w-l {
    width: 84px;
}

.toggle {
    display: flex;
    width: 66px;
    height: 22px;
    margin: 6px 0 4px;
    border: 1px solid #8da2bf;
    border-radius: 2px;
    background: #eef3f9;
}

.toggle b {
    width: 27px;
    border-right: 1px solid #8da2bf;
    background: linear-gradient(135deg, #aebfd6, #e4ecf6);
}

.toggle em {
    flex: 1;
    font: bold 11px/20px "Liberation Mono", monospace;
    color: #5e6b7c;
}


/* Group boxes */

.group-head {
    display: flex;
    justify-content: center;
    height: 20px;
    background: linear-gradient(#6d81a0, #6d81a0) 0 9px / 100% 1px no-repeat;
}

.legend {
    height: 20px;
    padding: 0 8px;
    border: 1px solid #6d81a0;
    border-top: 0;
    border-radius: 0 0 3px 3px;
    background: linear-gradient(#f2f7fd, #dbe7f5);
    color: #22388a;
    line-height: 14px;
}

.info {
    height: 137px;
    border-top: 1px solid #5b6f8c;
    padding: 0 2px;
}

.info-box {
    display: flex;
    flex-direction: column;
    height: 115px;
    overflow: hidden;
    border: 1px solid #7f9cbf;
    background: #fff;
}

.info-table {
    width: 100%;
}

.info-table th,
.detail-table th,
.sub-table th {
    height: 31px;
    border-right: 1px solid #7f9cbf;
    border-bottom: 1px solid #7f9cbf;
    background: linear-gradient(#f3f8fd, #dde8f5);
    white-space: nowrap;
    overflow: hidden;
}

.info-table th:nth-child(1) { width: 34px; }
.info-table th:nth-child(2) { width: 70px; }
.info-table th:nth-child(3) { width: 94px; }
.info-table th:nth-child(4) { width: 112px; }
.info-table th:nth-child(5) { width: 35px; }
.info-table th:nth-child(6) { width: 64px; }
.info-table th:nth-child(7) { width: 70px; }
.info-table th:nth-child(8) { width: 45px; }
.info-table th:nth-child(9) { width: 40px; }
.info-table th:nth-child(10) { width: 39px; }
.info-table th:nth-child(11) { width: 121px; }
.info-table th:nth-child(12) { width: 56px; }

th.corner,
.info-table th.corner,
.detail-table th.corner {
    background: linear-gradient(135deg, transparent 50%, #3f7bdc 50%) right 2px bottom 2px / 11px 11px no-repeat, linear-gradient(#f3f8fd, #dde8f5);
}

.info-table td {
    height: 22px;
    padding-left: 1px;
    background: #afd3f8;
    border-right: 1px solid #bddaf8;
    white-space: nowrap;
}

.info-table td.rowmark {
    padding-left: 3px;
    background: #c3c9d2;
}

.info-table .arr-r {
    display: block;
    width: 0;
    border-left-color: #000;
}

.hbar {
    display: flex;
    align-items: center;
    gap: 5px;
    height: 11px;
    margin-top: auto;
    padding-left: 6px;
    background: #f5f6f8;
}

.thumb {
    border: 1px solid #9a9fa8;
    border-radius: 1px;
    background: linear-gradient(#f8f8fa, #dfe3ea);
}

.hbar .thumb {
    flex: 1;
    height: 9px;
}

.arr-l,
.arr-r,
.arr-u,
.arr-d {
    border: 4px solid transparent;
}

.arr-l {
    border-right: 5px solid #555;
    border-left: 0;
}

.arr-r {
    border-left: 5px solid #555;
    border-right: 0;
}

.arr-u {
    border-bottom: 5px solid #555;
    border-top: 0;
}

.arr-d {
    border-top: 5px solid #555;
    border-bottom: 0;
}

.split-h {
    height: 6px;
    padding: 1px 0 0 711px;
    background: linear-gradient(#71839c, #b9c6d6);
}

.split-h span {
    display: block;
    width: 40px;
    height: 3px;
    background: repeating-linear-gradient(90deg, #2d4776 0 2px, transparent 2px 4px);
}

.split-v {
    display: flex;
    align-items: center;
    justify-content: center;
    width: 5px;
    background: linear-gradient(90deg, #6f83a0, #c7d2de, #8999ae);
}

.split-v.wide {
    width: 8px;
    border-right: 2px solid #4b6ea5;
}

.split-v span {
    width: 3px;
    height: 36px;
    background: repeating-linear-gradient(#2d4776 0 2px, transparent 2px 4px);
}

.lower {
    flex: 1;
    display: grid;
    grid-template-columns: 666px 8px 375px 8px 198px 1fr;
    min-height: 0;
}

.flow {
    display: flex;
    flex-direction: column;
    min-height: 0;
    padding-bottom: 3px;
}

.flow-body {
    flex: 1;
    display: flex;
    min-height: 0;
}


/* Device structure */

.vtabs {
    width: 24px;
    padding: 4px 0 0 6px;
    background: linear-gradient(90deg, #cfdffc, #f1f6ff);
}

.vtab {
    width: 18px;
    height: 90px;
    padding-bottom: 25px;
    border-left: 1px solid #44639b;
    background: linear-gradient(90deg, #dbe8ff, #8fb2e8);
    clip-path: polygon(0 0, 100% 0, 100% 100%, 0 78%);
    writing-mode: vertical-rl;
    text-orientation: sideways;
    font-weight: bold;
    line-height: 17px;
}

.device {
    display: flex;
    flex-direction: column;
    width: 197px;
    padding: 8px 1px 0 6px;
    border: 1px solid #44639b;
    background: linear-gradient(90deg, #8db0e8, #dceafd);
}

.device-head {
    display: flex;
    align-items: center;
    height: 34px;
    padding: 0 0 2px 15px;
    gap: 22px;
    background: #f3f3f3;
    color: #1d355c;
}

.device-head svg {
    width: 24px;
    height: 20px;
}

.device-tree {
    height: 277px;
    border: 1px solid #7f9cbf;
    background: #fff;
}

.device-tree li {
    display: flex;
    align-items: center;
    height: 19px;
    padding-left: 9px;
}

.device-tree .child {
    padding-left: 30px;
}

.device-tree .child::before {
    content: "";
    width: 10px;
    height: 10px;
    margin: -9px 2px 0 -1px;
    border-left: 1px dotted #000;
    border-bottom: 1px dotted #000;
}

.exp {
    width: 9px;
    height: 9px;
    margin-right: 7px;
}

.node {
    display: flex;
    align-items: center;
    gap: 7px;
    padding: 0 5px 0 0;
    line-height: 17px;
}

.node.sel {
    background: #efefef;
}

.node svg {
    width: 15px;
    height: 13px;
}

.hint {
    height: 38px;
    padding: 8px 0 0 5px;
    line-height: 13px;
    white-space: nowrap;
}

.sub-box {
    height: 129px;
    border: 1px solid #7f9cbf;
    border-right: 0;
    background: #fff;
}

.sub-table {
    width: 100%;
}

.sub-table th {
    height: 29px;
}

.sub-table th:nth-child(1) { width: 74px; }
.sub-table th:nth-child(2) { width: 50px; }
.sub-table th:nth-child(3) { width: 40px; }

.sub-table th:last-child {
    border-right: 0;
    background: #cfdcec;
}

.sub-table td {
    height: 21px;
    border-right: 1px solid #b7cae2;
    border-bottom: 1px solid #b7cae2;
    text-align: center;
}

.sub-table td.hit {
    background: #afd3f8;
}

.sub-table input {
    display: block;
    appearance: none;
    width: 13px;
    height: 13px;
    margin: 0 auto;
    border: 1px solid #a9a9a9;
    background: #f4f4f4;
}

.sub-table input::after {
    content: "";
    display: block;
    width: 4px;
    height: 7px;
    margin: 0 auto;
    border: solid #9a9a9a;
    border-width: 0 2px 2px 0;
    transform: rotate(40deg);
}


/* Process tree */

.process {
    flex: 1;
    display: flex;
    flex-direction: column;
    min-width: 0;
    margin-right: 4px;
    border: 1px solid #7f9cbf;
    border-left: 0;
    background: #fff;
}

.process-view {
    flex: 1;
    display: flex;
    min-height: 0;
    overflow: hidden;
}

.process-table {
    align-self: flex-start;
    width: 422px;
}

.process-table th {
    height: 20px;
    padding: 0 0 3px 7px;
    border-right: 1px solid #c9d4e3;
    background: linear-gradient(#eef4fb, #dbe6f4) 0 0 / 100% 17px no-repeat;
    text-align: left;
    line-height: 17px;
}

.process-table th:nth-child(1) { width: 155px; padding-left: 0; }
.process-table th:nth-child(2) { width: 55px; }
.process-table th:nth-child(3) { width: 75px; }
.process-table th:nth-child(4) { width: 75px; }
.process-table th:nth-child(5) { border-right: 0; }

.process-table td {
    height: 19px;
    padding-left: 6px;
    border-right: 1px solid #dedede;
    line-height: 18px;
    white-space: nowrap;
}

.process-table td:last-child {
    border-right: 0;
}

.process-table td:first-child {
    padding-left: 26px;
    background: repeating-linear-gradient(#000 0 1px, transparent 1px 2px) 26px 0 / 1px 100% no-repeat;
}

.branch {
    display: flex;
    align-items: center;
    height: 19px;
}

.branch .exp {
    margin: 0 0 0 -4px;
}

.branch .dots {
    width: 8px;
    border-top: 1px dotted #000;
}

.branch .ico-f {
    width: 16px;
    height: 14px;
    margin-right: 5px;
}

.branch .ico-p {
    width: 14px;
    height: 17px;
    margin-right: 5px;
}

.branch.leaf {
    padding-left: 16px;
}

.branch.leaf::before {
    content: "";
    align-self: stretch;
    width: 1px;
    background: repeating-linear-gradient(#000 0 1px, transparent 1px 2px);
}

.branch.leaf.last::before {
    height: 10px;
    align-self: flex-start;
}

.branch.leaf .dots {
    width: 9px;
    margin-right: 4px;
}

.process-table tr.picked td {
    background: linear-gradient(#fdf0c0, #fcd04a 55%, #fbe28a);
}

.process-table tr.picked td:first-child {
    background: linear-gradient(#fdf0c0, #fcd04a 55%, #fbe28a) 53px 0 no-repeat, repeating-linear-gradient(#000 0 1px, transparent 1px 2px) 26px 0 / 1px 100% no-repeat;
}

.vbar {
    display: flex;
    flex-direction: column;
    align-items: center;
    width: 15px;
    padding: 7px 0 6px;
    background: #f7f7f7;
}

.vbar .thumb {
    width: 14px;
    height: 313px;
    margin: 253px 0 auto;
    background: repeating-linear-gradient(#777 0 1px, transparent 1px 2px) center / 8px 7px no-repeat, linear-gradient(90deg, #f8f8fa, #dfe3ea);
}

.hbar.wide {
    gap: 6px;
    height: 16px;
    margin: 0 16px 0 0;
    padding: 0 6px 0 2px;
}

.hbar.wide .thumb {
    flex: none;
    width: 223px;
    height: 15px;
    margin-right: auto;
    background: repeating-linear-gradient(90deg, #777 0 1px, transparent 1px 2px) center / 7px 8px no-repeat, linear-gradient(#f8f8fa, #dfe3ea);
}


/* Detail pane */

.detail {
    background: #fff;
    overflow: hidden;
    border-bottom: 2px solid #4b6ea5;
}

.tabs {
    display: flex;
    height: 25px;
    background: #d5e2f2;
}

.tab {
    flex: none;
    width: 67px;
    padding: 0 0 4px 5px;
    background: #dfe9f6;
    text-align: left;
    line-height: 20px;
}

.tab.on {
    padding-left: 0;
    background: conic-gradient(from 135deg at 50% 18px, #fff 90deg, transparent 0), linear-gradient(#1c57b8, #3d86e8);
    text-align: center;
    color: #fff;
    font-weight: bold;
}

.subtabs {
    height: 28px;
    padding-top: 2px;
    background: #e9f2fc;
}

.subtab {
    width: 100%;
    height: 26px;
    padding: 0 0 6px 35px;
    background: linear-gradient(#d3e3fb, #8db0e8);
    clip-path: polygon(20px 0, 100% 0, 100% 100%, 0 100%, 0 20px, 3px 20px);
    text-align: left;
    font-weight: bold;
}

.detail-table {
    width: 100%;
}

.detail-table th:nth-child(1) { width: 33px; }
.detail-table th:nth-child(2) { width: 40px; }

.grey {
    display: flex;
    align-items: flex-end;
    justify-content: flex-end;
    padding: 0 8px 8px 0;
    background: linear-gradient(90deg, transparent calc(100% - 17px), #fff 0, #fff calc(100% - 16px), transparent 0), #efefef;
    border-right: 2px solid #7f9cc8;
    border-bottom: 2px solid #7f9cc8;
}

.chev {
    width: 5px;
    height: 5px;
    border: solid #b5b5b5;
    border-width: 0 2px 2px 0;
    transform: rotate(45deg);
}

.eds-status {
    display: flex;
    align-items: center;
    height: 33px;
    padding: 0 1px 4px 416px;
    border-top: 2px solid #5b7393;
    border-bottom: 1px solid #5b7393;
    background: linear-gradient(#eaf3fc, #d5e1f1);
    color: #22386a;
}

.eds-status span.mix {
    flex: 1;
    padding-left: 331px;
}

.eds-status a {
    text-decoration: underline;
}


/* Total Commander window */

.tc {
    position: absolute;
    top: 58px;
    left: 954px;
    right: 0;
    bottom: 229px;
    display: flex;
    flex-direction: column;
    background: #fff;
    border: 1px solid #6d7885;
    border-right: 0;
    box-shadow: 0 2px 14px rgba(0, 0, 0, 0.4);
    font-family: "Noto Sans", "Noto Sans CJK SC", sans-serif;
    font-size: 16px;
}

.tc .lat {
    font-family: "Noto Sans", sans-serif;
    font-size: 14px;
}

.tc-title {
    display: flex;
    align-items: center;
    gap: 6px;
    height: 28px;
    padding-left: 7px;
    font-size: 13px;
}

.tc-title svg {
    width: 16px;
    height: 16px;
}

.tc-menu {
    display: flex;
    gap: 15px;
    height: 23px;
    padding-left: 6px;
    border-bottom: 1px solid #999;
    font-size: 12px;
}

.tc-tools {
    display: flex;
    align-items: flex-start;
    gap: 1px;
    height: 32px;
    padding-top: 1px;
    border-bottom: 1px solid #999;
}

.tc-tools button {
    display: flex;
    flex-direction: column;
    align-items: center;
    justify-content: center;
    width: 28px;
    height: 28px;
}

.tc-tools svg {
    width: 17px;
    height: 17px;
}

.tc-tools button.on {
    background: #cce8ff;
    border: 1px solid #99d1ff;
}

.tc-tools .sep {
    width: 1px;
    height: 24px;
    margin: 2px 3px 0 4px;
    background: #888;
}

.tc-tools small {
    font: bold 8px/8px "Liberation Sans", sans-serif;
    color: #a01818;
}

.tc-tools small + svg {
    height: 10px;
}

.tc-ftp {
    display: flex;
    align-items: center;
    height: 31px;
    padding-left: 3px;
    white-space: nowrap;
}

.tc-ftp .proto {
    width: 54px;
    font-size: 14px;
}

.tc-ftp label {
    width: 69px;
}

.tc-ftp select {
    appearance: none;
    width: 176px;
    height: 28px;
    padding: 0 20px 2px 4px;
    border: 1px solid #adadad;
    background: #e1e1e1;
}

.mode,
.combo {
    position: relative;
    display: flex;
    align-items: center;
}

.mode::after,
.combo::after {
    content: "";
    position: absolute;
    right: 6px;
    width: 5px;
    height: 5px;
    margin-bottom: 4px;
    border: solid #555;
    border-width: 0 1px 1px 0;
    transform: rotate(45deg);
}

.tc-ftp button {
    width: 35px;
    height: 26px;
    margin: 0 5px 0 4px;
    border: 1px solid #adadad;
    background: #e1e1e1;
    line-height: 22px;
}

.log {
    flex: 1;
    height: 30px;
    padding-left: 2px;
    overflow: hidden;
    border: 1px solid #777;
    font: 11px/14px Roboto, "Noto Sans CJK SC", sans-serif;
}

.tc-grid {
    display: grid;
    grid-template-columns: 525px 36px 1fr;
}

.drives-row {
    height: 29px;
    border-bottom: 1px solid #999;
}

.drives {
    display: flex;
    gap: 2px;
    padding-top: 1px;
}

.drives button {
    display: flex;
    align-items: center;
    gap: 3px;
    width: 36px;
    height: 23px;
    padding-left: 3px;
    border: 1px solid transparent;
    font-size: 15px;
}

.drives svg {
    width: 16px;
    height: 16px;
}

.drives button.on {
    background: #cce8ff;
    border-color: #99d1ff;
}

.panes {
    flex: 1;
    min-height: 0;
    background: #f0f0f0;
}

.pane {
    display: flex;
    flex-direction: column;
    min-width: 0;
    min-height: 0;
    overflow: hidden;
}

.volume {
    display: flex;
    align-items: center;
    height: 31px;
    padding-bottom: 2px;
    white-space: nowrap;
}

.combo {
    width: 56px;
    height: 27px;
    padding-left: 4px;
    border: 1px solid #777;
    background: #fff;
}

.combo svg {
    width: 14px;
    height: 14px;
}

.combo select {
    appearance: none;
    flex: 1;
    min-width: 0;
    padding-left: 5px;
    font-size: 14px;
}

.free {
    flex: 1;
    padding-left: 4px;
}

.volume button {
    width: 22px;
    font-size: 14px;
}

.volume .root {
    height: 24px;
    border-left: 1px solid #888;
}

.path {
    display: flex;
    height: 22px;
    margin: 0 0 2px 1px;
    line-height: 20px;
    font-size: 14px;
}

.path span {
    flex: 1;
    display: flex;
    align-items: center;
    gap: 3px;
    padding-left: 3px;
    border: 1px solid #888;
    border-width: 1px 0 0 1px;
    background: #99b4d1;
}

.tri {
    display: inline-block;
    border: 6px solid transparent;
    border-top: 8px solid #000;
    border-bottom: 0;
}

.tri.small {
    margin-bottom: 3px;
    border-width: 5px 5px 0;
}

.path button {
    width: 20px;
}

.other .path span {
    background: #bfcddb;
}

.files {
    flex: 1;
    min-height: 0;
    overflow: hidden;
    margin-left: 1px;
    border: 1px solid #999;
    border-bottom: 0;
    background: #fff;
}

.files table {
    width: 620px;
}

.files th {
    height: 23px;
    padding-left: 3px;
    border-right: 1px solid #e0e0e0;
    border-bottom: 1px solid #999;
    text-align: left;
    line-height: 21px;
}

.files th:nth-child(1) { width: 293px; padding-left: 1px; }
.files th:nth-child(2) { width: 60px; }
.files th:nth-child(3) { width: 64px; }

.files th.name,
.other .files th {
    border-right: 0;
    background: #bbdcf2;
}

.files th b {
    font-family: "DejaVu Sans", sans-serif;
    font-size: 14px;
    line-height: 1;
}

.files td {
    height: 21px;
    line-height: 20px;
    white-space: nowrap;
}

.files td:nth-child(3) {
    padding-right: 8px;
    text-align: right;
}

.files tr:first-child td:nth-child(3) {
    padding-right: 22px;
}

.files .entry {
    display: flex;
    align-items: center;
    gap: 2px;
    padding-left: 2px;
}

.files .entry svg {
    width: 15px;
    height: 16px;
}

.files tr.picked td {
    background: #cce8ff;
    box-shadow: inset 0 1px #99d1ff, inset 0 -1px #99d1ff;
    color: #e0101c;
}

.other .files table {
    width: 640px;
}

.other .files th:nth-child(1) {
    width: 290px;
}

.summary {
    height: 25px;
    margin-left: 1px;
    padding-left: 3px;
    border: 1px solid #999;
    border-top-color: #ccc;
    line-height: 23px;
    white-space: nowrap;
}

.midbar {
    display: flex;
    flex-direction: column;
    align-items: center;
    padding-top: 63px;
}

.midbar button {
    height: 32px;
    padding: 8px 0;
}

.midbar button.gap {
    margin-top: 32px;
}

.midbar svg {
    width: 16px;
    height: 16px;
}

.tc-cmd {
    display: flex;
    height: 31px;
    padding: 4px 0 0;
    background: #f0f0f0;
    font-size: 14px;
}

.tc-cmd label {
    width: 363px;
    padding-right: 4px;
    text-align: right;
    line-height: 27px;
}

.tc-cmd input {
    flex: 1;
    border: 1px solid #777;
    background: #fff;
}

.tc-keys {
    display: flex;
    align-items: center;
    height: 31px;
    padding-top: 2px;
    background: #f0f0f0;
}

.tc-keys button {
    width: 154px;
    height: 23px;
    border-right: 1px solid #999;
    line-height: 21px;
}


/* Input method bar */

.ime {
    position: absolute;
    right: 0;
    bottom: 41px;
    display: flex;
    align-items: center;
    gap: 9px;
    height: 25px;
    padding: 0 4px 0 32px;
    background: #fff;
    color: #0a6fd6;
    font-size: 15px;
    font-weight: bold;
}

.ime svg {
    width: 15px;
    height: 14px;
}

.ime span {
    width: 16px;
    white-space: nowrap;
}

.ime .ime-logo {
    position: absolute;
    left: -5px;
    bottom: 0;
    width: 31px;
    height: 30px;
}


/* Taskbar */

.taskbar {
    position: absolute;
    left: 0;
    right: 0;
    bottom: 0;
    display: flex;
    height: 41px;
    background: #1b2b31;
    color: #fff;
    font-family: "Noto Sans", "Noto Sans CJK SC", sans-serif;
    font-size: 13px;
}

.task {
    display: flex;
    align-items: center;
    gap: 7px;
    width: 159px;
    margin-right: 2px;
    padding: 0 0 0 9px;
    border-bottom: 2px solid #76b9ed;
    white-space: nowrap;
}

.task.active {
    width: 582px;
    justify-content: flex-end;
    padding-right: 12px;
    background: #47565b;
}

.task svg {
    width: 22px;
    height: 21px;
}

.tray {
    flex: 1;
    display: flex;
    justify-content: flex-end;
    align-items: center;
    gap: 9px;
    padding-right: 24px;
}

.tray svg {
    width: 16px;
    height: 16px;
}

.tray .tray-s {
    margin-left: 4px;
}

.clock {
    width: 66px;
    margin: 0 8px 0 6px;
    text-align: center;
    font-size: 12px;
    line-height: 17px;
    white-space: nowrap;
}
```

FILE: script.js
```js
const XMLNS = 'http://www.w3.org/2000/svg';
const PICKED_ROW = 14;
const WRITTEN_FROM = 18;
const WRITTEN_TO = 21;

// rows that start with "-" are leaves
const processRows = [
    '外层干膜', '-外层前处理', '-贴膜', '-曝光', '-显影', '-酸性蚀刻', '-退膜',
    'AOI', '-外层AOI',
    '阻焊', '-阻焊前处理', '-喷涂', '-预烘', '-曝光', '-显影',
    '字符', '-字符', '-终固化',
    '电子测试', '-电子测试', '外形', '-铣板', '-成品清洗',
    '终检', '-功能检查', '-外观检查', '沉锡', '-沉锡', '终检1', '-外观检查1',
    '包装', '-内包装', '成品仓'
];

const leftFiles = [
    ['up', '[..]', '', '<DIR>', '2023/02/02 19:02'],
    ['pdf', '孔表', 'pdf', '43,544', '2023/01/28 11:48'],
    ['pdf', '尺寸图', 'pdf', '40,094', '2023/01/28 11:52'],
    ['xls', 'Q14V0156LQA0(linqiong)', 'xls', '88,064', '2023/02/02 17:12'],
    ['xls', '4V0156LQA0制作单', 'xls', '29,696', '2023/02/02 19:01'],
    ['xls', '4V0156LQA0-预审指示', 'xls', '482,816', '2023/01/31 16:22'],
    ['pdf', '4V0156LQA0尺寸', 'pdf', '40,094', '2023/02/02 13:45'],
    ['jpg', '4V0156LQA0不允许油墨入孔', 'jpg', '318,761', '2023/02/02 13:45'],
    ['txt', '4v0156lqa0', 'txt', '891', '2023/02/02 13:45']
];

const rightFiles = [
    ['up', '[..]', '', '', ''],
    ['txt', '4v0156lqa0', '', '', ''],
    ['jpg', '4V0156LQA0不允许油墨入孔', '', '', ''],
    ['pdf', '4V0156LQA0尺寸', '', '', ''],
    ['xls', '4V0156LQA0-预审指示', '', '', ''],
    ['xls', '4V0156LQA0制作单', '', '', ''],
    ['xls', 'Q14V0156LQA0(linqiong)', '', '', ''],
    ['pdf', '尺寸图', 'pdf', '', ''],
    ['pdf', '孔表', 'pdf', '', '']
];

const tools = ['refresh', '|', 'grid', '*list', 'frame', 'tree', '|', 'branch', '|', 'star', '|', 'left', 'right', '|',
    'pack', 'unpack', '|', 'FTP', 'URL', '|', 'binoc', 'rename', 'sync', 'paste', '|', 'note', 'pie', 'pp'];

function icon(id, cls) {
    const svg = document.createElementNS(XMLNS, 'svg');
    const use = document.createElementNS(XMLNS, 'use');
    use.setAttribute('href', '#' + id);
    if (cls) svg.setAttribute('class', cls);
    svg.appendChild(use);
    return svg;
}

function el(tag, cls) {
    const node = document.createElement(tag);
    if (cls) node.className = cls;
    return node;
}

// Put the latin runs of a text in their own span, they use another font size
function fillMixed(node, text) {
    node.textContent = '';
    text.split(/([\x21-\x7e]+(?: [\x21-\x7e]+)*)/).forEach((part, i) => {
        if (!part) return;
        if (i % 2) {
            const span = el('span', 'lat');
            span.textContent = part;
            node.appendChild(span);
        } else {
            node.appendChild(document.createTextNode(part));
        }
    });
    return node;
}

function renderProcess() {
    const body = document.getElementById('processBody');
    processRows.forEach((item, i) => {
        const leaf = item[0] === '-';
        const next = processRows[i + 1];
        const written = i >= WRITTEN_FROM && i <= WRITTEN_TO;
        const row = el('tr', i === PICKED_ROW ? 'picked' : '');
        const cell = el('td');
        const branch = el('div', leaf ? 'branch leaf' : 'branch');
        if (leaf && (!next || next[0] !== '-')) branch.classList.add('last');
        if (!leaf) branch.appendChild(icon('minus', 'exp'));
        branch.appendChild(el('i', 'dots'));
        branch.appendChild(icon(leaf ? 'page' : 'folder', leaf ? 'ico-p' : 'ico-f'));
        branch.appendChild(fillMixed(el('span'), item.replace('-', '')));
        cell.appendChild(branch);
        row.appendChild(cell);
        ['P10', '李剑', written ? '' : '李剑', written ? '已编写' : '已上网'].forEach(text => {
            row.appendChild(fillMixed(el('td'), text));
        });
        body.appendChild(row);
    });
}

function renderFiles(id, files, picked) {
    const body = document.getElementById(id);
    files.forEach((file, i) => {
        const row = el('tr', i === picked ? 'picked' : '');
        const cell = el('td');
        const entry = el('div', 'entry');
        entry.appendChild(icon(file[0]));
        entry.appendChild(fillMixed(el('span'), file[1]));
        cell.appendChild(entry);
        row.appendChild(cell);
        file.slice(2).forEach(text => row.appendChild(fillMixed(el('td'), text)));
        body.appendChild(row);
    });
}

function renderTools() {
    const bar = document.getElementById('tcTools');
    tools.forEach(name => {
        if (name === '|') {
            bar.appendChild(el('i', 'sep'));
            return;
        }
        const button = el('button', name[0] === '*' ? 'on' : '');
        if (name === 'FTP' || name === 'URL') {
            const label = el('small');
            label.textContent = name;
            button.appendChild(label);
            button.appendChild(icon('net'));
        } else {
            button.appendChild(icon(name.replace('*', '')));
        }
        bar.appendChild(button);
    });

    const mid = document.getElementById('midBar');
    ['view', 'edit', 'copy', 'move', 'dir', 'pack', 'newdir'].forEach(name => {
        const button = el('button', name === 'pack' ? 'gap' : '');
        button.appendChild(icon(name));
        mid.appendChild(button);
    });
}

function renderDrives() {
    const drives = 'cdefg01234\\'.split('');
    document.querySelectorAll('.drives').forEach((bar, side) => {
        drives.slice(0, side ? 7 : 11).forEach(name => {
            const button = el('button', name === 'e' ? 'on' : '');
            const id = name === 'c' ? 'windrive' : name === '\\' ? 'network' : name < 'a' ? 'netfolder' : 'drive';
            button.appendChild(icon(id));
            button.appendChild(document.createTextNode(name));
            bar.appendChild(button);
        });
    });
}

document.querySelectorAll('.mix').forEach(node => fillMixed(node, node.textContent));
renderProcess();
renderFiles('leftFiles', leftFiles, 7);
renderFiles('rightFiles', rightFiles, -1);
renderTools();
renderDrives();
```
